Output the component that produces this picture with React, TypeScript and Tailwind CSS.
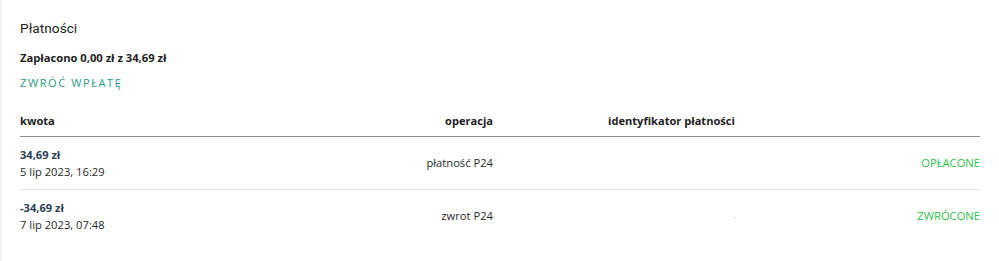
const rows = [
  { amount: '34,69 zł', date: '5 lip 2023, 16:29', op: 'płatność P24', id: '', status: 'OPŁACONE' },
  { amount: '-34,69 zł', date: '7 lip 2023, 07:48', op: 'zwrot P24', id: '.', status: 'ZWRÓCONE' },
]

export default function App() {
  return (
    <div className="flex min-h-[261px] bg-white font-['Open_Sans',sans-serif] text-[11.2px] text-[#222]">
      <div className="w-[2px] bg-[#eef0f3]" />
      <div className="flex-1 pl-[18px] pr-[19px] pt-[18px]">
        <h2 className="font-['Roboto',sans-serif] text-[13.7px] leading-[20px] text-[#1e1e1e]">Płatności</h2>
        <p className="mt-[11px] text-[11.2px] font-bold leading-[18px] text-[#1e1e1e]">
          Zapłacono 0,00 zł z 34,69 zł
        </p>
        <button className="mt-[7px] block text-[11px] leading-[18px] tracking-[1.6px] text-[#1f9a86]">
          ZWRÓĆ WPŁATĘ
        </button>

        <div className="mt-[20px]">
          <div className="grid grid-cols-[273px_200px_1fr_200px] border-b border-[#8c8c8c] pb-[6px] text-[11.1px] font-bold leading-[18px] text-[#1e1e1e]">
            <div>kwota</div>
            <div className="text-right">operacja</div>
            <div className="pl-[115px]">identyfikator płatności</div>
            <div />
          </div>
          {rows.map((r, i) => (
            <div
              key={i}
              className={
                'grid grid-cols-[273px_200px_1fr_200px] items-center py-[9px] ' +
                (i === 0 ? 'border-b border-[#e4e4e4]' : '')
              }
            >
              <div className="leading-[17px]">
                <div className="text-[11.1px] font-bold text-[#2b4257]">{r.amount}</div>
                <div className="text-[#2a2a2a]">{r.date}</div>
              </div>
              <div className="text-right text-[#2a2a2a]">{r.op}</div>
              <div className="pl-[115px]">
                {r.id && <span className="ml-[127px] mt-[2px] block h-[1px] w-[1px] bg-[#9fc6c0]" />}
              </div>
              <div className="text-right text-[#2fc24a]">{r.status}</div>
            </div>
          ))}
        </div>
      </div>
    </div>
  )
}
